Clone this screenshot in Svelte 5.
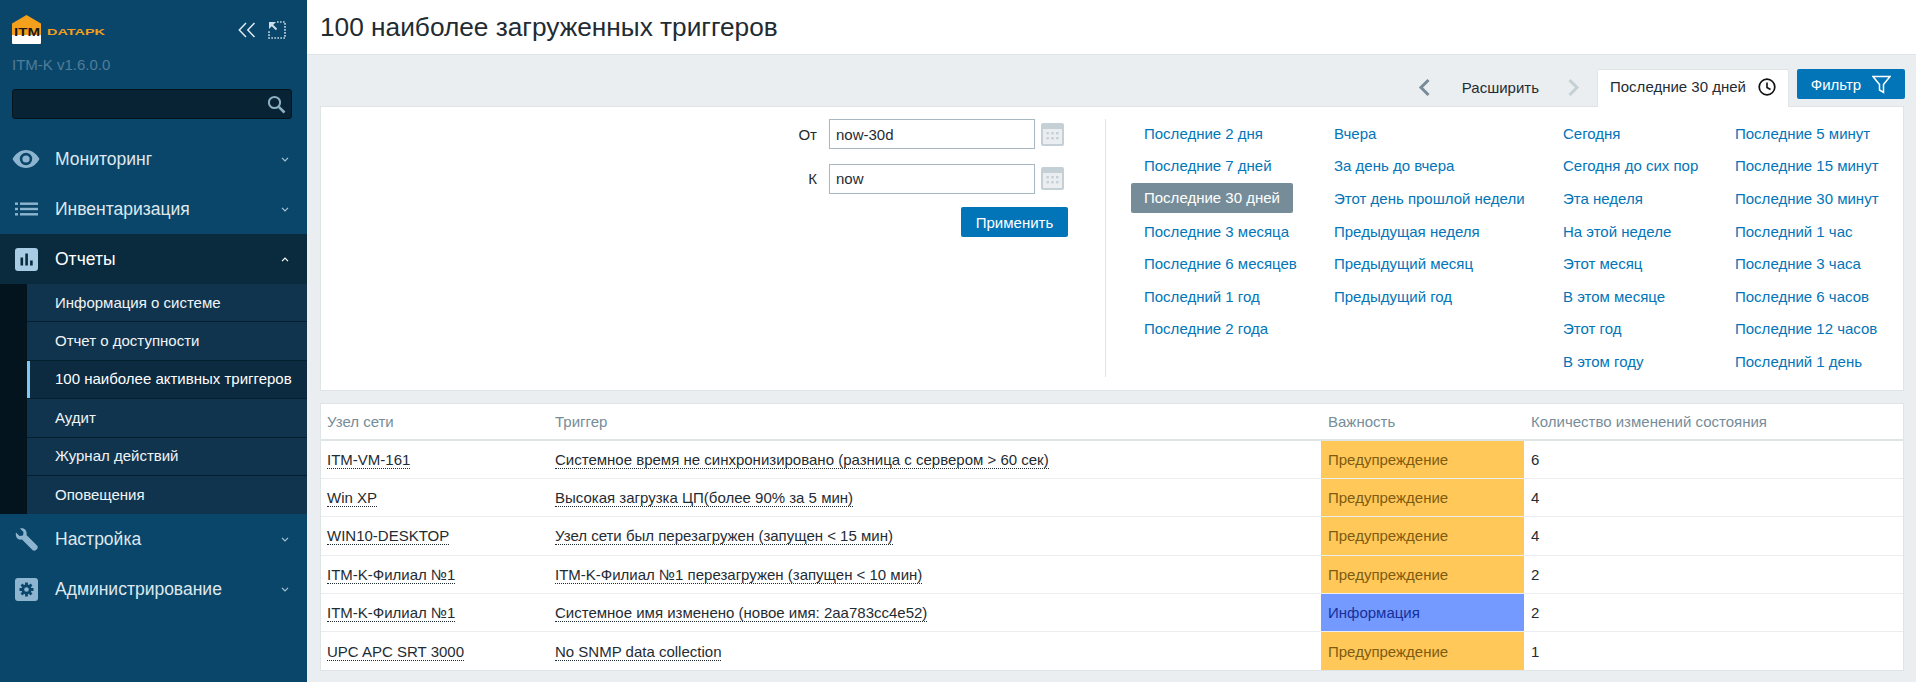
<script>
  const menu_top = [
    { name: "Мониторинг", icon: "eye" },
    { name: "Инвентаризация", icon: "list" },
  ];
  const sub_menu = [
    "Информация о системе",
    "Отчет о доступности",
    "100 наиболее активных триггеров",
    "Аудит",
    "Журнал действий",
    "Оповещения",
  ];
  const columns = [
    ["Последние 2 дня", "Последние 7 дней", "Последние 30 дней", "Последние 3 месяца", "Последние 6 месяцев", "Последний 1 год", "Последние 2 года"],
    ["Вчера", "За день до вчера", "Этот день прошлой недели", "Предыдущая неделя", "Предыдущий месяц", "Предыдущий год"],
    ["Сегодня", "Сегодня до сих пор", "Эта неделя", "На этой неделе", "Этот месяц", "В этом месяце", "Этот год", "В этом году"],
    ["Последние 5 минут", "Последние 15 минут", "Последние 30 минут", "Последний 1 час", "Последние 3 часа", "Последние 6 часов", "Последние 12 часов", "Последний 1 день"],
  ];
  const rows = [
    ["ITM-VM-161", "Системное время не синхронизировано (разница с сервером > 60 сек)", "Предупреждение", 6],
    ["Win XP", "Высокая загрузка ЦП(более 90% за 5 мин)", "Предупреждение", 4],
    ["WIN10-DESKTOP", "Узел сети был перезагружен (запущен < 15 мин)", "Предупреждение", 4],
    ["ITM-K-Филиал №1", "ITM-K-Филиал №1 перезагружен (запущен < 10 мин)", "Предупреждение", 2],
    ["ITM-K-Филиал №1", "Системное имя изменено (новое имя: 2aa783cc4e52)", "Информация", 2],
    ["UPC APC SRT 3000", "No SNMP data collection", "Предупреждение", 1],
  ];
</script>

{#snippet chevron(up)}
  <svg class="chev" width="8" height="5" viewBox="0 0 8 5">
    <path d={up ? "M1 4.200L4 1.200L7 4.200" : "M1 0.800L4 3.800L7 0.800"} fill="none" stroke="currentColor" stroke-width="1.200" />
  </svg>
{/snippet}

{#snippet calendar()}
  <svg class="cal" width="23" height="23" viewBox="0 0 23 23">
    <rect width="23" height="23" rx="2" fill="#c4cfd6" />
    <rect x="2" y="6" width="19" height="15" fill="#ebeef0" />
    <g fill="#c4cfd6">
      <rect x="5.500" y="9" width="2.400" height="2.400" /><rect x="10.300" y="9" width="2.400" height="2.400" /><rect x="15.100" y="9" width="2.400" height="2.400" />
      <rect x="5.500" y="14" width="2.400" height="2.400" /><rect x="10.300" y="14" width="2.400" height="2.400" /><rect x="15.100" y="14" width="2.400" height="2.400" />
    </g>
  </svg>
{/snippet}

<div class="page">
  <aside class="sidebar">
    <div class="logo_row">
      <svg class="logo" width="94" height="31" viewBox="0 0 94 31">
        <path d="M0 9.500L14.500 1L29 9.500V28.500a1.500 1.500 0 0 1-1.500 1.500h-26A1.500 1.500 0 0 1 0 28.500Z" fill="#f5a01c" />
        <path d="M0 21H29V28.500a1.500 1.500 0 0 1-1.500 1.500h-26A1.500 1.500 0 0 1 0 28.500Z" fill="#fff" />
        <text x="2" y="22" font-family="Liberation Sans" font-weight="700" font-size="11.500" fill="#1a1a1a" textLength="26" lengthAdjust="spacingAndGlyphs">ITM</text>
        <text x="35" y="21" font-family="Liberation Sans" font-weight="700" font-size="9.800" fill="#f5a01c" textLength="58" lengthAdjust="spacingAndGlyphs">DATAPK</text>
      </svg>
      <svg class="collapse" width="18" height="16" viewBox="0 0 18 16">
        <path d="M8 1L1.300 8L8 15M16.500 1L9.800 8L16.500 15" fill="none" stroke="#dfe9ef" stroke-width="1.500" />
      </svg>
      <svg class="expand" width="18" height="18" viewBox="0 0 18 18">
        <path d="M9 1H17V17H1V9" fill="none" stroke="#b9cedb" stroke-width="1.700" stroke-dasharray="1.700 1.300" />
        <path d="M2 2L8.500 8.500" fill="none" stroke="#cfdfe9" stroke-width="2" />
        <path d="M1 1H8L1 8Z" fill="#cfdfe9" />
      </svg>
    </div>
    <div class="version">ITM-K v1.6.0.0</div>
    <div class="search">
      <svg width="19" height="19" viewBox="0 0 19 19">
        <circle cx="7.500" cy="7.500" r="5.600" fill="none" stroke="#8fb0c4" stroke-width="2" />
        <path d="M11.800 11.800L17.500 17.500" stroke="#8fb0c4" stroke-width="2.600" />
      </svg>
    </div>

    <nav class="nav">
      {#each menu_top as item}
        <div class="top_item">
          <span class="ico">
            {#if item.icon === "eye"}
              <svg width="28" height="20" viewBox="0 0 28 20">
                <path fill-rule="evenodd" d="M14 1C8 1 3.200 5 0.500 10C3.200 15 8 19 14 19S24.800 15 27.500 10C24.800 5 20 1 14 1ZM14 3.800a6.200 6.200 0 1 1 0 12.400a6.200 6.200 0 0 1 0-12.400Z" fill="#8db5d0" />
                <circle cx="14" cy="10" r="3.600" fill="#8db5d0" />
              </svg>
            {:else}
              <svg width="23" height="14" viewBox="0 0 23 14">
                <g fill="#8db5d0">
                  <rect x="0" y="0.500" width="3" height="2.400" /><rect x="5" y="0.500" width="18" height="2.400" />
                  <rect x="0" y="5.800" width="3" height="2.400" /><rect x="5" y="5.800" width="18" height="2.400" />
                  <rect x="0" y="11.100" width="3" height="2.400" /><rect x="5" y="11.100" width="18" height="2.400" />
                </g>
              </svg>
            {/if}
          </span>
          <span class="top_name">{item.name}</span>
          {@render chevron(false)}
        </div>
      {/each}

      <div class="active_group">
        <div class="top_item active">
          <span class="ico">
            <svg width="23" height="23" viewBox="0 0 23 23">
              <rect width="23" height="23" rx="3" fill="#a8cce4" />
              <g fill="#0a2a3e"><rect x="5.500" y="9.500" width="2.600" height="8" /><rect x="10.300" y="5.500" width="2.600" height="12" /><rect x="15.100" y="12.500" width="2.600" height="5" /></g>
            </svg>
          </span>
          <span class="top_name">Отчеты</span>
          {@render chevron(true)}
        </div>
        <ul class="sub">
          {#each sub_menu as name, i}
            <li class:selected={i === 2}>{name}</li>
          {/each}
        </ul>
      </div>

      <div class="top_item">
        <span class="ico">
          <svg width="23" height="23" viewBox="0 0 23 23">
            <path d="M1 4.500L4.500 8L8 7.500L8.500 4L5 0.500C8.500 -0.500 12.500 2 11.500 7L22 17.500C23 18.500 23 20 22 21L21 22C20 23 18.500 23 17.500 22L7 11.500C2.500 12.500 0 8.500 1 4.500Z" fill="#8db5d0" />
          </svg>
        </span>
        <span class="top_name">Настройка</span>
        {@render chevron(false)}
      </div>
      <div class="top_item">
        <span class="ico">
          <svg width="23" height="23" viewBox="0 0 23 23">
            <rect width="23" height="23" rx="3" fill="#8db5d0" />
            <circle cx="11.500" cy="11.500" r="5" fill="#0a466a" />
            <g stroke="#0a466a" stroke-width="2.800">
              <path d="M11.500 4.500V18.500M4.500 11.500H18.500M6.500 6.500L16.500 16.500M16.500 6.500L6.500 16.500" />
            </g>
            <circle cx="11.500" cy="11.500" r="2.300" fill="#8db5d0" />
          </svg>
        </span>
        <span class="top_name">Администрирование</span>
        {@render chevron(false)}
      </div>
    </nav>
  </aside>

  <main class="main">
    <header class="title_bar"><h1>100 наиболее загруженных триггеров</h1></header>

    <div class="content">
      <div class="tabs">
        <svg class="arrow" width="13" height="19" viewBox="0 0 13 19"><path d="M10.500 2L3 9.500L10.500 17" fill="none" stroke="#768d99" stroke-width="3" /></svg>
        <span class="zoom_out">Расширить</span>
        <svg class="arrow" width="13" height="19" viewBox="0 0 13 19"><path d="M2.500 2L10 9.500L2.500 17" fill="none" stroke="#c4cfd6" stroke-width="3" /></svg>
        <div class="tab">
          Последние 30 дней
          <svg width="18" height="18" viewBox="0 0 18 18">
            <circle cx="9" cy="9" r="7.800" fill="none" stroke="#111" stroke-width="1.700" />
            <path d="M9 4.500V9.500L12.500 11.500" fill="none" stroke="#111" stroke-width="1.600" />
          </svg>
        </div>
        <button class="btn filter_btn">
          Фильтр
          <svg width="19" height="19" viewBox="0 0 19 19">
            <path d="M1 1.500H18L11.500 9.500V17.500L7.500 15V9.500Z" fill="none" stroke="#fff" stroke-width="1.500" />
          </svg>
        </button>
      </div>

      <section class="panel">
        <div class="form">
          <div class="form_row">
            <label for="from">От</label>
            <input id="from" value="now-30d" />
            {@render calendar()}
          </div>
          <div class="form_row">
            <label for="to">К</label>
            <input id="to" value="now" />
            {@render calendar()}
          </div>
          <button class="btn apply">Применить</button>
        </div>
        <div class="ranges">
          {#each columns as col}
            <ul class="range_col">
              {#each col as label}
                <li><span class:current={label === "Последние 30 дней"}>{label}</span></li>
              {/each}
            </ul>
          {/each}
        </div>
      </section>

      <table>
        <colgroup>
          <col style="width: 228px" />
          <col style="width: 773px" />
          <col style="width: 203px" />
          <col />
        </colgroup>
        <thead>
          <tr>
            <th>Узел сети</th>
            <th>Триггер</th>
            <th>Важность</th>
            <th>Количество изменений состояния</th>
          </tr>
        </thead>
        <tbody>
          {#each rows as row}
            <tr>
              <td><span class="link">{row[0]}</span></td>
              <td><span class="link">{row[1]}</span></td>
              <td class={row[2] === "Информация" ? "info" : "warn"}>{row[2]}</td>
              <td>{row[3]}</td>
            </tr>
          {/each}
        </tbody>
      </table>
    </div>
  </main>
</div>

<style>
  :global(body) {
    margin: 0;
    background: #ebeef0;
    font-family: "Liberation Sans", Arial, sans-serif;
    font-size: 15px;
    color: #1f2c33;
  }
  ul {
    list-style: none;
    margin: 0;
    padding: 0;
  }
  .page {
    display: flex;
    height: 682px;
    overflow: hidden;
  }

  .sidebar {
    width: 307px;
    flex: none;
    background: #0a466a;
    display: flex;
    flex-direction: column;
  }
  .logo_row {
    display: flex;
    align-items: center;
    height: 31px;
    margin: 14px 0 0 12px;
  }
  .collapse {
    margin-left: 132px;
    margin-right: 12px;
  }
  .version {
    margin: 10px 0 0 12px;
    height: 19px;
    line-height: 19px;
    color: #517d99;
  }
  .search {
    margin: 15px 15px 0 12px;
    height: 30px;
    box-sizing: border-box;
    background: #082434;
    border: 1px solid #04141e;
    border-radius: 3px;
    display: flex;
    align-items: center;
    justify-content: flex-end;
    padding-right: 5px;
  }
  .nav {
    margin-top: 15px;
  }
  .top_item {
    display: flex;
    align-items: center;
    height: 50px;
    padding: 0 18px 0 12px;
    color: #dfe8ee;
    font-size: 17.500px;
  }
  .top_item.active {
    color: #fff;
    background: #0a2a3e;
  }
  .ico {
    width: 28px;
    display: flex;
    justify-content: center;
    margin-right: 15px;
  }
  .top_name {
    flex: 1;
  }
  .chev {
    color: #a9c4d6;
  }
  .active .chev {
    color: #fff;
  }
  .active_group {
    background: #04141e;
  }
  .sub {
    margin-left: 27px;
    background: #11344e;
  }
  .sub li {
    height: 38.400px;
    box-sizing: border-box;
    display: flex;
    align-items: center;
    padding: 0 0 1px 28px;
    color: #f0f4f7;
    border-bottom: 1px solid #04202f;
    white-space: nowrap;
  }
  .sub li:last-child {
    border-bottom: 0;
  }
  .sub li.selected {
    background: #0c2a40;
    box-shadow: inset 3px 0 0 #7ec8f5;
    color: #fff;
  }

  .main {
    flex: 1;
    min-width: 0;
    display: flex;
    flex-direction: column;
  }
  .title_bar {
    height: 55px;
    box-sizing: border-box;
    background: #fff;
    border-bottom: 1px solid #dfe4e7;
    display: flex;
    align-items: center;
    padding-left: 13px;
  }
  h1 {
    margin: 0;
    font-size: 26.250px;
    font-weight: 400;
    color: #1f2c33;
  }
  .content {
    padding: 14px 12px 0 13px;
  }
  .tabs {
    display: flex;
    justify-content: flex-end;
    align-items: center;
    height: 37px;
  }
  .zoom_out {
    margin: 0 28px 0 31px;
  }
  .tab {
    height: 38px;
    box-sizing: border-box;
    width: 192px;
    margin-left: 17px;
    align-self: flex-start;
    position: relative;
    z-index: 1;
    background: #fff;
    border: 1px solid #dfe4e7;
    border-bottom: 0;
    display: flex;
    align-items: center;
    gap: 12px;
    padding: 0 12px 4px 12px;
    border-radius: 2px 2px 0 0;
    white-space: nowrap;
  }
  .btn {
    border: 0;
    background: #0275b8;
    color: #fff;
    font: inherit;
    border-radius: 2px;
    height: 30px;
    padding: 0;
  }
  .filter_btn {
    width: 108px;
    margin: 0 -1px 0 8px;
    align-self: flex-start;
    display: flex;
    align-items: center;
    justify-content: center;
    gap: 11px;
  }
  .panel {
    height: 285px;
    box-sizing: border-box;
    background: #fff;
    border: 1px solid #dfe4e7;
    display: flex;
    padding-top: 12px;
  }
  .form {
    width: 747px;
    flex: none;
    display: flex;
    flex-direction: column;
    align-items: flex-end;
  }
  .form_row {
    display: flex;
    align-items: center;
    height: 30px;
    margin: 0 4px 14.500px 0;
  }
  label {
    margin-right: 12px;
  }
  input {
    width: 206px;
    height: 30px;
    box-sizing: border-box;
    border: 1px solid #a7b8c3;
    padding: 0 6px;
    font: inherit;
    color: #1f2c33;
    outline: none;
  }
  .cal {
    margin-left: 6px;
  }
  .apply {
    width: 107px;
    margin-top: -1px;
  }
  .ranges {
    margin-left: 37px;
    border-left: 1px solid #dfe4e7;
    height: 258px;
    flex: 1;
    padding-left: 38px;
    display: grid;
    grid-template-columns: 190px 229px 172px 1fr;
  }
  .range_col {
    margin-top: -2px;
  }
  .range_col li {
    height: 32.600px;
    display: flex;
    align-items: center;
    color: #0275b8;
    white-space: nowrap;
  }
  .range_col li span {
    padding: 0 13px;
    margin-left: -13px;
  }
  .range_col li span.current {
    background: #768d99;
    color: #fff;
    border-radius: 2px;
    line-height: 30px;
  }

  table {
    width: 100%;
    margin-top: 12px;
    border-collapse: collapse;
    table-layout: fixed;
    background: #fff;
    outline: 1px solid #dfe4e7;
    outline-offset: -1px;
  }
  th {
    height: 36px;
    padding: 0 7px;
    text-align: left;
    font-weight: 400;
    color: #768d99;
    border-bottom: 2px solid #dfe4e7;
  }
  td {
    height: 38.400px;
    box-sizing: border-box;
    padding: 0 7px;
    border-bottom: 1px solid #ebeef0;
    white-space: nowrap;
  }
  .link {
    border-bottom: 1px dotted #1f2c33;
  }
  .warn {
    background: #ffc859;
    color: #7d5c12;
  }
  .info {
    background: #7499ff;
    color: #14309a;
  }
</style>
